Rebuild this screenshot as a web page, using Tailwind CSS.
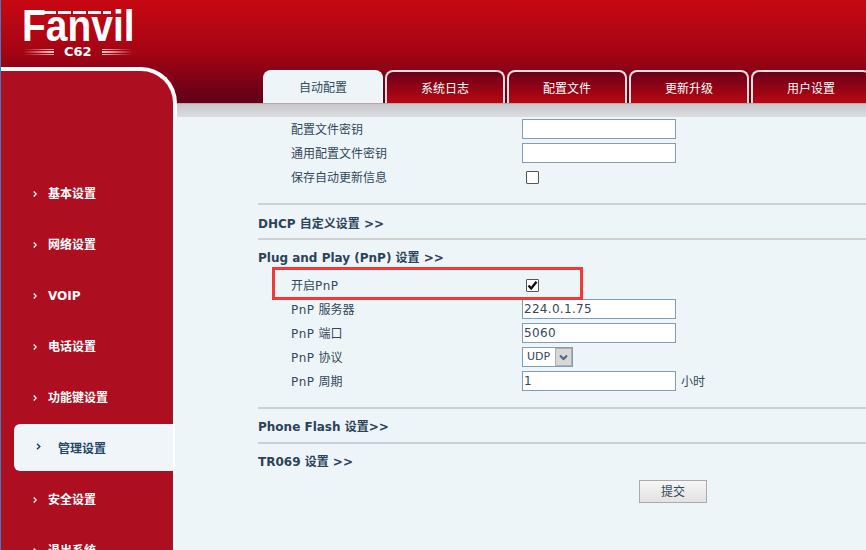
<!DOCTYPE html>
<html lang="en">
<head>
  <meta charset="UTF-8">
  <title>Fanvil C62</title>
  <script src="https://cdn.jsdelivr.net/npm/@tailwindcss/browser@4"></script>
</head>
<body class="m-0 overflow-hidden">
<div class="relative flex w-[866px] h-[550px] overflow-hidden border-l border-l-[#3a7fc0] bg-[#eef5f8] font-['DejaVu_Sans','Noto_Sans_CJK_SC',sans-serif] text-xs text-[#33475a]">

  <!-- header gradient runs behind both columns -->
  <div class="absolute inset-x-0 top-0 h-[104px] bg-[linear-gradient(to_bottom,#c70812_0%,#a50414_50%,#5e0018_100%)]"></div>

  <!-- left column -->
  <div class="relative flex flex-col w-[176px] shrink-0">
    <div class="relative h-[67px] shrink-0">
      <div class="absolute left-[21px] top-[10px] text-[44px] leading-[32px] font-bold text-white font-['Liberation_Sans',sans-serif] scale-x-[.885] origin-left">Fanvil</div>
      <div class="absolute left-[38px] top-[11px] flex gap-[2px]">
        <span class="w-[17px] h-[3px] bg-white"></span>
        <span class="w-[13px] h-[3px] bg-white"></span>
        <span class="w-[13px] h-[3px] bg-white"></span>
        <span class="w-[13px] h-[3px] bg-white"></span>
        <span class="w-[8px] h-[3px] bg-white"></span>
      </div>
      <div class="absolute left-[22px] top-[45px] flex items-center gap-[10px]">
        <span class="w-[31px] flex flex-col gap-[1px]">
          <span class="h-[1px] bg-linear-to-r from-transparent to-[#f0b8bc]"></span>
          <span class="h-[2px] bg-linear-to-r from-transparent to-[#f8d8da]"></span>
          <span class="h-[1px] bg-linear-to-r from-transparent to-[#f0b8bc]"></span>
        </span>
        <span class="text-[13px] leading-[14px] font-bold text-white">C62</span>
        <span class="w-[31px] flex flex-col gap-[1px]">
          <span class="h-[1px] bg-linear-to-l from-transparent to-[#f0b8bc]"></span>
          <span class="h-[2px] bg-linear-to-l from-transparent to-[#f8d8da]"></span>
          <span class="h-[1px] bg-linear-to-l from-transparent to-[#f0b8bc]"></span>
        </span>
      </div>
    </div>
    <div class="h-[50px] shrink-0 bg-[#ae0f20] border-t-4 border-r-4 border-white rounded-tr-[36px]"></div>
    <div class="flex-1 w-[174px] border-r-2 border-white bg-[#ae0f20] pt-[51px] flex flex-col font-bold text-white">
      <div class="h-[51px] shrink-0 flex items-center pl-[32px] gap-[11px]"><svg width="4" height="6" viewBox="0 0 4 6" fill="none" stroke="currentColor" stroke-width="1.3"><path d="M.7.5 3.2 3 .7 5.5"/></svg><span>基本设置</span></div>
      <div class="h-[51px] shrink-0 flex items-center pl-[32px] gap-[11px]"><svg width="4" height="6" viewBox="0 0 4 6" fill="none" stroke="currentColor" stroke-width="1.3"><path d="M.7.5 3.2 3 .7 5.5"/></svg><span>网络设置</span></div>
      <div class="h-[51px] shrink-0 flex items-center pl-[32px] gap-[11px]"><svg width="4" height="6" viewBox="0 0 4 6" fill="none" stroke="currentColor" stroke-width="1.3"><path d="M.7.5 3.2 3 .7 5.5"/></svg><span>VOIP</span></div>
      <div class="h-[51px] shrink-0 flex items-center pl-[32px] gap-[11px]"><svg width="4" height="6" viewBox="0 0 4 6" fill="none" stroke="currentColor" stroke-width="1.3"><path d="M.7.5 3.2 3 .7 5.5"/></svg><span>电话设置</span></div>
      <div class="h-[51px] shrink-0 flex items-center pl-[32px] gap-[11px]"><svg width="4" height="6" viewBox="0 0 4 6" fill="none" stroke="currentColor" stroke-width="1.3"><path d="M.7.5 3.2 3 .7 5.5"/></svg><span>功能键设置</span></div>
      <div class="h-[51px] shrink-0 flex items-center pb-[2px]">
        <div class="flex items-center h-[47px] w-full ml-[13px] pl-[22px] pt-[2px] gap-[17px] rounded-l-md bg-[#eff5f9] text-[#1f4468]"><svg class="-mt-[4px]" width="5" height="7" viewBox="0 0 5 7" fill="none" stroke="currentColor" stroke-width="1.5"><path d="M1 .7 3.8 3.5 1 6.3"/></svg><span>管理设置</span></div>
      </div>
      <div class="h-[51px] shrink-0 flex items-center pl-[32px] gap-[11px]"><svg width="4" height="6" viewBox="0 0 4 6" fill="none" stroke="currentColor" stroke-width="1.3"><path d="M.7.5 3.2 3 .7 5.5"/></svg><span>安全设置</span></div>
      <div class="h-[51px] shrink-0 flex items-center pl-[32px] gap-[11px]"><svg width="4" height="6" viewBox="0 0 4 6" fill="none" stroke="currentColor" stroke-width="1.3"><path d="M.7.5 3.2 3 .7 5.5"/></svg><span>退出系统</span></div>
    </div>
  </div>

  <!-- right column -->
  <div class="relative flex-1 min-w-0 flex flex-col">
    <div class="h-[70px] shrink-0"></div>
    <div class="h-[33px] shrink-0 flex gap-[2px] pl-[86px] w-[720px]">
      <div class="w-[120px] shrink-0 flex items-center justify-center rounded-t-lg bg-[#eef5f8] border border-b-0 border-white pt-[2px] text-[#2c4a60]">自动配置</div>
      <div class="w-[120px] shrink-0 flex items-center justify-center rounded-t-lg border-2 border-b-0 border-[#f0dfe0] bg-[linear-gradient(to_bottom,#6a0018,#b90712)] pt-[2px] text-white">系统日志</div>
      <div class="w-[120px] shrink-0 flex items-center justify-center rounded-t-lg border-2 border-b-0 border-[#f0dfe0] bg-[linear-gradient(to_bottom,#6a0018,#b90712)] pt-[2px] text-white">配置文件</div>
      <div class="w-[120px] shrink-0 flex items-center justify-center rounded-t-lg border-2 border-b-0 border-[#f0dfe0] bg-[linear-gradient(to_bottom,#6a0018,#b90712)] pt-[2px] text-white">更新升级</div>
      <div class="w-[120px] shrink-0 flex items-center justify-center rounded-t-lg border-2 border-b-0 border-[#f0dfe0] bg-[linear-gradient(to_bottom,#6a0018,#b90712)] pt-[2px] text-white">用户设置</div>
    </div>
    <div class="h-[14px] shrink-0 border-t border-[#c9a0a8] bg-[linear-gradient(to_bottom,#c6c7ca,#dcdde0)]"></div>

    <div class="pl-[81px] flex flex-col">
      <div class="pl-[33px]">
        <div class="h-6 flex items-center"><span class="w-[231px] pt-[2px]">配置文件密钥</span><span class="w-[154px] h-5 border border-[#7f9db9] bg-white"></span></div>
        <div class="h-6 flex items-center"><span class="w-[231px] pt-[2px]">通用配置文件密钥</span><span class="w-[154px] h-5 border border-[#7f9db9] bg-white"></span></div>
        <div class="h-6 flex items-center"><span class="w-[235px] pt-[2px]">保存自动更新信息</span><span class="w-[13px] h-[13px] border border-[#555] rounded-[1px] bg-white"></span></div>
      </div>

      <div class="mt-[14px] h-[2px] bg-[#d0d0d0]"></div>
      <div class="h-[33px] flex items-center pt-[4px] font-bold text-[#2b4358]">DHCP 自定义设置 &gt;&gt;</div>
      <div class="h-[2px] bg-[#d0d0d0]"></div>
      <div class="h-[33px] flex items-center pt-[2px] font-bold text-[#2b4358]">Plug and Play (PnP) 设置 &gt;&gt;</div>

      <div class="pl-[33px]">
        <div class="h-6 flex items-center"><span class="w-[235px] pt-[2px]">开启<span class="tracking-[.6px]">PnP</span></span><span class="w-[13px] h-[13px] border border-[#555] rounded-[1px] bg-white flex items-center justify-center"><svg width="11" height="11" viewBox="0 0 11 11" fill="none" stroke="#111" stroke-width="2.4"><path d="M1.5 5.5 4.2 8.5 9.5 1.8"/></svg></span></div>
        <div class="h-6 flex items-center"><span class="w-[231px] pt-[2px]"><span class="tracking-[.6px]">PnP</span> 服务器</span><span class="w-[154px] h-5 border border-[#7f9db9] bg-white pl-[1px] leading-[18px] tracking-[.3px]">224.0.1.75</span></div>
        <div class="h-6 flex items-center"><span class="w-[231px] pt-[2px]"><span class="tracking-[.6px]">PnP</span> 端口</span><span class="w-[154px] h-5 border border-[#7f9db9] bg-white pl-[1px] leading-[18px] tracking-[.4px]">5060</span></div>
        <div class="h-6 flex items-center"><span class="w-[231px] pt-[2px]"><span class="tracking-[.6px]">PnP</span> 协议</span>
          <span class="w-[51px] h-5 border border-[#7f9db9] bg-white flex items-center pl-[4px] justify-between text-[11px]">UDP<span class="w-[17px] h-[18px] bg-[#d8d8d8] border border-[#b0b0b0] flex items-center justify-center"><svg width="9" height="7" viewBox="0 0 9 7" fill="none" stroke="#4d6185" stroke-width="2"><path d="M1 1.5 4.5 5 8 1.5"/></svg></span></span>
        </div>
        <div class="h-6 flex items-center"><span class="w-[231px] pt-[2px]"><span class="tracking-[.6px]">PnP</span> 周期</span><span class="w-[154px] h-5 border border-[#7f9db9] bg-white pl-[1px] leading-[18px]">1</span><span class="ml-[5px] pt-[2px]">小时</span></div>
      </div>

      <div class="mt-[14px] h-[2px] bg-[#d0d0d0]"></div>
      <div class="h-[33px] flex items-center pt-[2px] font-bold text-[#2b4358]">Phone Flash 设置&gt;&gt;</div>
      <div class="h-[2px] bg-[#d0d0d0]"></div>
      <div class="h-[33px] flex items-center pt-[2px] font-bold text-[#2b4358]">TR069 设置 &gt;&gt;</div>

      <div class="mt-[3px] ml-[381px] w-[68px] h-[23px] border border-[#aaa] bg-[linear-gradient(to_bottom,#f6f6f6,#e2e2e2)] flex items-center justify-center">提交</div>
    </div>
  </div>

  <!-- annotation box drawn over the page -->
  <div class="absolute left-[271px] top-[267px] w-[311px] h-[33px] border-[3px] border-[#f33838]"></div>
</div>
</body>
</html>
